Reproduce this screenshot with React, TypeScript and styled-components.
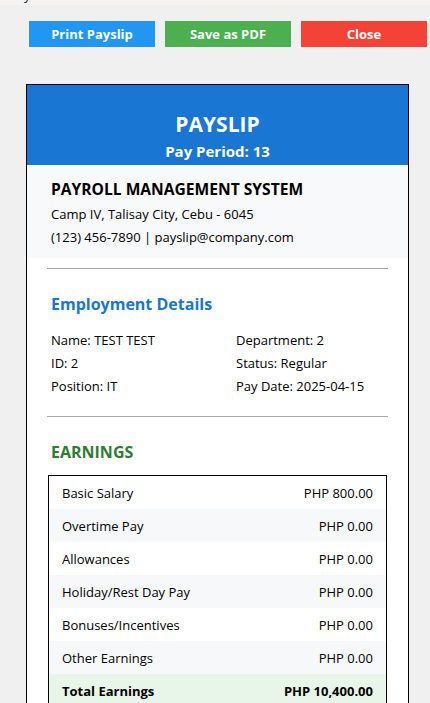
import styled, { createGlobalStyle } from "styled-components";

const GlobalStyle = createGlobalStyle`
  * { box-sizing: border-box; }
  body {
    margin: 0;
    background: #f0f0f0;
    font-family: "Open Sans", "Noto Sans", Arial, sans-serif;
    color: #000;
  }
`;

const TopStrip = styled.div`
  height: 5px;
  background: #f4f3f2;
  overflow: hidden;
  padding-left: 9px;
  font-size: 13px;
  line-height: 13px;
  color: #222;
  span {
    display: block;
    margin-top: -11px;
  }
`;

const Page = styled.div`
  padding: 16px 0 40px 26px;
`;

const Toolbar = styled.div`
  display: flex;
  gap: 10px;
  padding-left: 3px;
  margin-bottom: 37px;
`;

const ActionButton = styled.button<{ $bg: string }>`
  width: 126px;
  height: 26px;
  border: none;
  background: ${(p) => p.$bg};
  color: #fff;
  font-family: inherit;
  font-size: 13px;
  font-weight: 700;
  cursor: pointer;
`;

const Slip = styled.div`
  width: 383px;
  border: 1px solid #000;
  background: #fff;
`;

const Header = styled.div`
  background: #1976d2;
  color: #fff;
  text-align: center;
  height: 80px;
  padding-top: 25px;
`;

const SlipTitle = styled.h1`
  margin: 0;
  font-size: 21px;
  line-height: 28px;
  font-weight: 700;
`;

const Period = styled.div`
  font-size: 15px;
  font-weight: 700;
  line-height: 20px;
  margin-top: 3px;
`;

const Company = styled.div`
  background: #f8f9fa;
  padding: 13px 24px 9px;
`;

const CompanyName = styled.h2`
  margin: 0 0 3px;
  font-size: 15.6px;
  line-height: 22px;
  font-weight: 700;
`;

const Line = styled.p`
  margin: 0;
  font-size: 13px;
  line-height: 23px;
`;

const Rule = styled.hr<{ $top?: number }>`
  margin: ${(p) => p.$top ?? 10}px 20px 0;
  border: none;
  border-top: 1px solid #a8a8a8;
`;

const Section = styled.div`
  padding: 23px 24px 18px;
`;

const SectionTitle = styled.h3<{ $color: string; $gap: number }>`
  margin: 0 0 ${(p) => p.$gap}px;
  font-size: 16px;
  line-height: 24px;
  font-weight: 700;
  color: ${(p) => p.$color};
`;

const DetailGrid = styled.div`
  display: grid;
  grid-template-columns: 185px 1fr;
  font-size: 13px;
  line-height: 23px;
`;

const Table = styled.div`
  border: 1px solid #000;
  margin: 0 -3px;
`;

const Row = styled.div<{ $bg: string; $bold?: boolean }>`
  display: flex;
  justify-content: space-between;
  align-items: center;
  height: 33px;
  padding: 0 13px;
  background: ${(p) => p.$bg};
  font-size: 13px;
  font-weight: ${(p) => (p.$bold ? 700 : 400)};
`;

const details: [string, string][] = [
  ["Name: TEST TEST", "Department: 2"],
  ["ID: 2", "Status: Regular"],
  ["Position: IT", "Pay Date: 2025-04-15"],
];

const earnings: [string, string][] = [
  ["Basic Salary", "PHP 800.00"],
  ["Overtime Pay", "PHP 0.00"],
  ["Allowances", "PHP 0.00"],
  ["Holiday/Rest Day Pay", "PHP 0.00"],
  ["Bonuses/Incentives", "PHP 0.00"],
  ["Other Earnings", "PHP 0.00"],
];

const App = () => {
  return (
    <>
      <GlobalStyle />
      <TopStrip>
        <span>Pay</span>
      </TopStrip>
      <Page>
        <Toolbar>
          <ActionButton $bg="#2196f3">Print Payslip</ActionButton>
          <ActionButton $bg="#4caf50">Save as PDF</ActionButton>
          <ActionButton $bg="#f44336">Close</ActionButton>
        </Toolbar>
        <Slip>
          <Header>
            <SlipTitle>PAYSLIP</SlipTitle>
            <Period>Pay Period: 13</Period>
          </Header>
          <Company>
            <CompanyName>PAYROLL MANAGEMENT SYSTEM</CompanyName>
            <Line>Camp IV, Talisay City, Cebu - 6045</Line>
            <Line>(123) 456-7890 | payslip@company.com</Line>
          </Company>
          <Rule />
          <Section>
            <SectionTitle $color="#1976d2" $gap={13}>
              Employment Details
            </SectionTitle>
            <DetailGrid>
              {details.map(([a, b]) => [
                <span key={a}>{a}</span>,
                <span key={b}>{b}</span>,
              ])}
            </DetailGrid>
          </Section>
          <Rule $top={0} />
          <Section>
            <SectionTitle $color="#2e7d32" $gap={11}>
              EARNINGS
            </SectionTitle>
            <Table>
              {earnings.map(([label, value], i) => (
                <Row key={label} $bg={i % 2 ? "#f7f8fa" : "#fff"}>
                  <span>{label}</span>
                  <span>{value}</span>
                </Row>
              ))}
              <Row $bg="#e8f5e9" $bold>
                <span>Total Earnings</span>
                <span>PHP 10,400.00</span>
              </Row>
            </Table>
          </Section>
        </Slip>
      </Page>
    </>
  );
};

export default App;
